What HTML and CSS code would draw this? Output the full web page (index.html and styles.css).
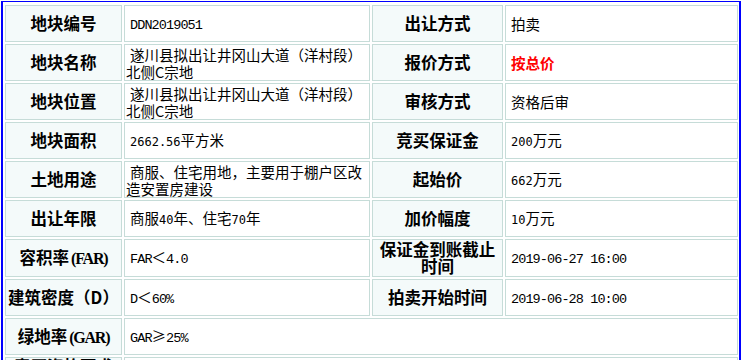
FILE: index.html
```html
<!DOCTYPE html>
<html lang="zh-CN">
<head>
<meta charset="utf-8">
<title>地块信息</title>
<link rel="stylesheet" href="styles.css">
</head>
<body>
<div class="frame">
  <table class="info">
    <colgroup>
      <col class="c1"><col class="c2"><col class="c3"><col class="c4">
    </colgroup>
    <tbody>
      <tr>
        <th>地块编号</th>
        <td><span class="ls">DDN2019051</span></td>
        <th>出让方式</th>
        <td>拍卖</td>
      </tr>
      <tr>
        <th>地块名称</th>
        <td>遂川县拟出让井冈山大道（洋村段）北侧C宗地</td>
        <th>报价方式</th>
        <td><b class="red">按总价</b></td>
      </tr>
      <tr>
        <th>地块位置</th>
        <td>遂川县拟出让井冈山大道（洋村段）北侧C宗地</td>
        <th>审核方式</th>
        <td>资格后审</td>
      </tr>
      <tr>
        <th>地块面积</th>
        <td><span class="ns">2662.56</span>平方米</td>
        <th>竞买保证金</th>
        <td><span class="ns">200</span>万元</td>
      </tr>
      <tr>
        <th>土地用途</th>
        <td>商服、住宅用地，主要用于棚户区改造安置房建设</td>
        <th>起始价</th>
        <td><span class="ns">662</span>万元</td>
      </tr>
      <tr>
        <th>出让年限</th>
        <td>商服<span class="ns">40</span>年、住宅<span class="ns">70</span>年</td>
        <th>加价幅度</th>
        <td><span class="ns">10</span>万元</td>
      </tr>
      <tr class="tall">
        <th>容积率<span class="lb">(FAR)</span></th>
        <td><span class="ls">FAR</span>＜<span class="ls">4.0</span></td>
        <th>保证金到账截止时间</th>
        <td><span class="ls">2019-06-27 16:00</span></td>
      </tr>
      <tr>
        <th>建筑密度（D）</th>
        <td><span class="ls">D</span>＜<span class="ls">60%</span></td>
        <th>拍卖开始时间</th>
        <td><span class="ls">2019-06-28 10:00</span></td>
      </tr>
      <tr>
        <th>绿地率<span class="lb">(GAR)</span></th>
        <td colspan="3"><span class="ls">GAR</span>≥<span class="ls">25%</span></td>
      </tr>
      <tr class="last">
        <th>竞买资格要求</th>
        <td colspan="3"></td>
      </tr>
    </tbody>
  </table>
</div>
</body>
</html>
```

FILE: styles.css
```css
html, body {
  margin: 0;
  padding: 0;
  background: #ffffff;
}

.frame {
  margin: 1px 0 0 1px;
  width: 736px;
  border-top: 1px solid #0000ff;
  border-left: 2px solid #0000ff;
  border-right: 2px solid #0000ff;
  padding-top: 1px;
  height: 400px;
  overflow: hidden;
}

.info {
  border-collapse: separate;
  border-spacing: 2px;
  table-layout: fixed;
  width: 737px;
  font-family: "Noto Sans CJK SC", "Noto Sans", sans-serif;
  color: #000;
}

.c1 { width: 117px; }
.c2 { width: 246px; }
.c3 { width: 131px; }
.c4 { width: 233px; }

.info tr { height: 37px; }
.info tr.tall { height: 38px; }

.info th,
.info td {
  border: 1px solid #c6dcd8;
  padding: 0 1px;
  vertical-align: middle;
}

.info th {
  background: #f4fafa;
  font-size: 16.5px;
  font-weight: 700;
  line-height: 17px;
  text-align: center;
}

.info td {
  background: #ffffff;
  font-size: 14.5px;
  font-weight: 400;
  line-height: 17px;
  text-align: left;
  text-indent: 4px;
}

.red {
  color: #ff0000;
  font-size: 14.5px;
  font-weight: 700;
}

.lb {
  font-family: "Liberation Serif", serif;
  font-size: 16px;
  letter-spacing: -1.2px;
  margin-left: 2px;
}

.ls {
  font-family: "Liberation Mono", monospace;
  font-size: 13.5px;
  letter-spacing: -0.9px;
}

.ns {
  font-family: "DejaVu Sans Mono", monospace;
  font-size: 12px;
}

.info tr.last th {
  vertical-align: top;
}
```
